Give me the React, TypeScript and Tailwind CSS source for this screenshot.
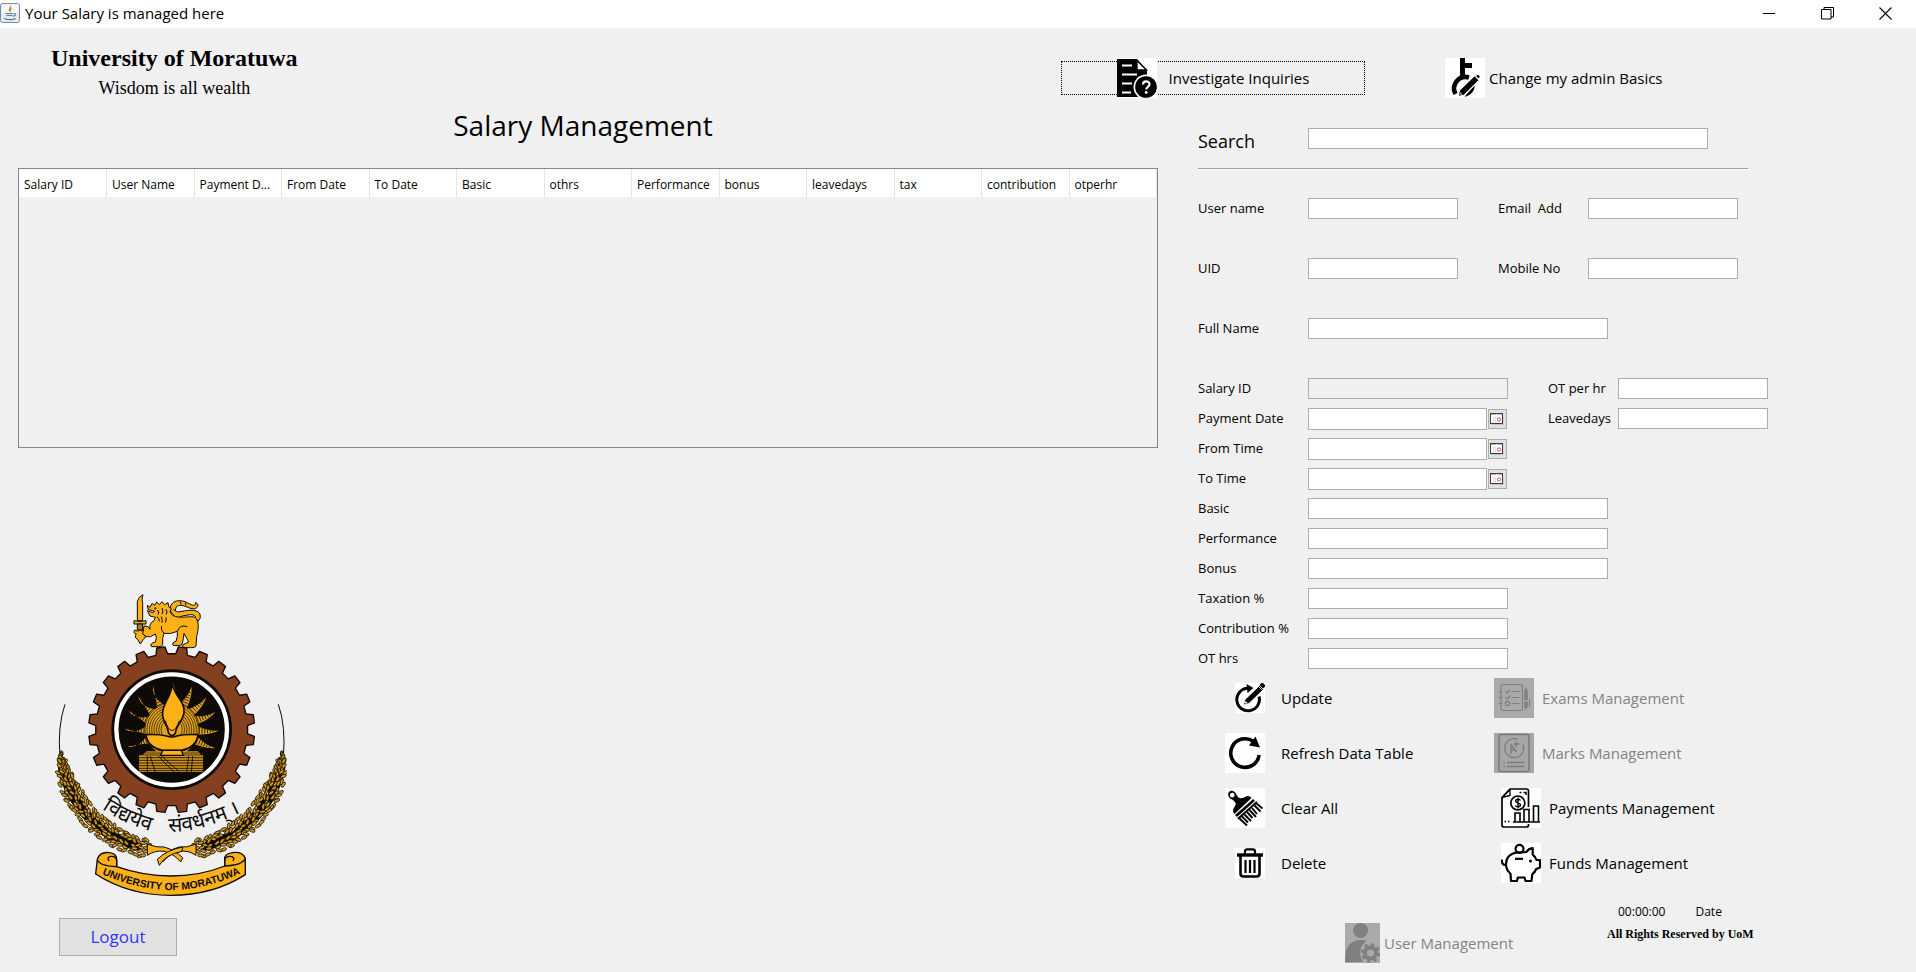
import React from "react";

const GOLD = "#fbb117";
const INK = "#0d0a08";

const COLUMNS = [
  "Salary ID",
  "User Name",
  "Payment D...",
  "From Date",
  "To Date",
  "Basic",
  "othrs",
  "Performance",
  "bonus",
  "leavedays",
  "tax",
  "contribution",
  "otperhr",
];

/* ---------- small icons ---------- */

function JavaIcon() {
  return (
    <svg width="20" height="20" viewBox="0 0 20 20" aria-hidden="true">
      <rect x="0.5" y="0.5" width="19" height="19" rx="2" fill="#e4eaf0" stroke="#7b8a99" />
      <rect x="1.5" y="1.5" width="17" height="8" fill="#f6f8fa" />
      <path d="M10 3c2 2-2 3-.5 5M11.5 5.5c-2 1-1.500 2-1 3.200" stroke="#e8762c" strokeWidth="1.300" fill="none" />
      <path d="M5.500 10.500h8M6.500 12.500h6M14 10.500c2.500 0 1.500 2.500-1 2.800M4 15.500c3 1.500 9 1.500 12 0" stroke="#5382a1" strokeWidth="1.200" fill="none" />
    </svg>
  );
}

function InquiryIcon() {
  return (
    <svg width="40" height="40" viewBox="0 0 40 40" aria-hidden="true">
      <rect width="40" height="40" fill="#fff" />
      <path d="M0 1H20L30 12V39H0Z" fill="#000" />
      <path d="M20 2.500V12H29.500Z" fill="#fff" stroke="#000" strokeWidth="1.300" />
      <path d="M5 7.500H15M5 16.500H20M5 25.500H15M5 34.500H14" stroke="#fff" strokeWidth="2.200" />
      <circle cx="29" cy="29" r="12.500" fill="#fff" />
      <circle cx="29" cy="29" r="10.800" fill="#000" />
      <path d="M26 26.500c0-4 6.500-4 6.500-.3 0 2.500-3.200 2.600-3.200 5.300" stroke="#fff" strokeWidth="2.200" fill="none" />
      <circle cx="29.200" cy="34.500" r="1.400" fill="#fff" />
    </svg>
  );
}

function KeyPencilIcon() {
  return (
    <svg width="40" height="40" viewBox="0 0 40 40" aria-hidden="true">
      <rect width="40" height="40" fill="#fff" />
      <path d="M15 0h5v5h7v5h-7v9h-5z" fill="#000" />
      <path d="M10.500 36A11.500 11.500 0 0 1 24 19.500" fill="none" stroke="#000" strokeWidth="4.600" />
      <path d="M29.500 27c1 5-4 11-10 11.800z" fill="#000" />
      <path d="M13 38.500l1.500-6.500L29.500 17.500l4.800 4.800L19.500 37z" fill="#000" stroke="#fff" strokeWidth="1.200" />
      <path d="M14 37.500l1-4 3 3z" fill="#777" />
      <path d="M31 18l2-1.200 1.800 1.800-1.200 2z" fill="#000" />
    </svg>
  );
}

function UpdateIcon() {
  return (
    <svg width="30" height="30" viewBox="0 0 30 30" aria-hidden="true">
      <rect width="30" height="30" fill="#fff" />
      <path d="M24 13.500a11.300 11.300 0 1 1-11-8.300" fill="none" stroke="#000" strokeWidth="3" />
      <path d="M11.500 1l7 4-6 5z" fill="#000" />
      <path d="M8.500 22l1.500-5.500L24.500 2.500l4 4L14 20.500z" fill="#000" stroke="#fff" strokeWidth=".9" />
      <path d="M24.500 2l2-2h1.500l2 2v1.500l-2 2z" fill="#000" />
      <path d="M23.500 3.500l4 4" stroke="#fff" strokeWidth=".8" />
      <path d="M9.800 20.800l.8-2.800 2 2z" fill="#fff" />
    </svg>
  );
}

function RefreshIcon() {
  return (
    <svg width="40" height="40" viewBox="0 0 40 40" aria-hidden="true">
      <rect width="40" height="40" fill="#fdfdfd" />
      <path d="M34.200 22A14.300 14.300 0 1 1 28.500 8.500" fill="none" stroke="#000" strokeWidth="3.600" />
      <path d="M30.500 3.500L35 14.500 24 12.500z" fill="#000" />
    </svg>
  );
}

function BrushIcon() {
  return (
    <svg width="40" height="40" viewBox="0 0 40 40" aria-hidden="true">
      <rect width="40" height="40" fill="#fdfdfd" />
      <path fillRule="evenodd" d="M3.500 8C2 4 6 1.500 9 3.500c2.500 1.600 2 3.500 4 5.500 2 2 4.500 1.500 7 0 3-2 5-.5 6.500 1L9.500 26c-2-2-2-4.500 0-7 1.500-2.500 1.800-4-.5-6C7 11 4.500 11 3.500 8zM7.200 4.800a2.400 2.400 0 1 0 .1 4.800 2.400 2.400 0 0 0-.1-4.800z" fill="#000" />
      <path d="M11 28L29 12" stroke="#000" strokeWidth="2.600" />
      <path d="M13 30.800L32 14" stroke="#000" strokeWidth="2" />
      <path d="M14.500 30.500l7.500 7M17 28.500l6 6M19.500 26.500l6.500 6.500M22 24l5.500 6M24.500 22l6.500 7M27 20l5 6M29.500 17.500l6 6M31.500 15.500l6 5" stroke="#000" strokeWidth="1.900" />
    </svg>
  );
}

function TrashIcon() {
  return (
    <svg width="30" height="30" viewBox="0 0 30 30" aria-hidden="true">
      <rect width="30" height="30" fill="#fff" />
      <path d="M2 7h26" stroke="#000" strokeWidth="3.400" />
      <path d="M10 6V3.500Q10 1.300 12.200 1.300h5.600Q20 1.300 20 3.500V6" fill="none" stroke="#000" strokeWidth="2.200" />
      <path d="M5.500 8v17.500q0 3 3 3h13q3 0 3-3V8" fill="none" stroke="#000" strokeWidth="2.600" />
      <path d="M10.500 12v13M15 12v13M19.500 12v13" stroke="#000" strokeWidth="2.200" />
    </svg>
  );
}

function ExamsIcon() {
  return (
    <svg width="40" height="40" viewBox="0 0 40 40" aria-hidden="true">
      <rect width="40" height="40" fill="#aaa" />
      <g fill="none" stroke="#808080" strokeWidth="1.200">
        <rect x="7" y="6.500" width="21.500" height="26" rx="2" />
        <path d="M4.500 14h4M4.500 19.500h4M4.500 25.500h4M17.500 13.500h8M17.500 19.500h8M17.500 25.500h8M11.500 13l1.800 2 3-3.500M11.500 19l1.800 2 3-3.500" />
        <circle cx="13.500" cy="25.500" r="2.200" />
      </g>
      <path d="M32 9l1.800 4v9h-3.600v-9zM30.200 23.500h3.600V29l-1.800 2.500L30.200 29z" fill="#808080" />
      <path d="M35.500 21v8" stroke="#808080" />
    </svg>
  );
}

function MarksIcon() {
  return (
    <svg width="40" height="40" viewBox="0 0 40 40" aria-hidden="true">
      <rect width="40" height="40" fill="#a6a6a6" />
      <g fill="none" stroke="#7c7c7c" strokeWidth="1.200">
        <rect x="5" y="1.500" width="30" height="37" rx="2" strokeWidth="1.600" />
        <path d="M29 11.500a9.500 9.500 0 1 1-5.500-5.300M29.200 13.500a10 10 0 0 1 .3 3" />
        <path d="M16.800 21l.5-9 5.500 7M17 17.500l4-1.500M22 8.500v5.500M19.500 11h6" strokeWidth="1.400" />
        <path d="M9.500 29.500h1.500M13 29.500h17.500M9.500 33.500h1.500M13 33.500h17.500" strokeWidth="1.500" />
      </g>
    </svg>
  );
}

function PaymentsIcon() {
  return (
    <svg width="40" height="40" viewBox="0 0 40 40" aria-hidden="true">
      <rect width="40" height="40" fill="#fdfdfd" />
      <g fill="none" stroke="#000" strokeWidth="1.700">
        <path d="M27.500 19V3Q27.500 1 25.500 1H9L1 9.500V37q0 2 2 2h22.500q2 0 2-2v-1" />
        <path d="M1 9.500L9 7.500V1M1.500 9l7-7" strokeWidth="1.300" />
        <circle cx="16.800" cy="15" r="7" />
        <path d="M19.500 12.500c-.8-1.500-5-1.800-5 .5s5 1.500 5 4-4.500 2-5.200.5M17 9.500v11" strokeWidth="1.400" />
        <path d="M14 34V25h5v9M23 34V21.500h5V34M32.500 34V18h5v16" strokeWidth="1.600" />
        <path d="M12 34H39M3.500 33.500h1.500M7 33.500h1.500M18.500 4.500h2M22.500 4.500h2.500v2.500" strokeWidth="1.500" />
      </g>
    </svg>
  );
}

function PiggyIcon() {
  return (
    <svg width="40" height="40" viewBox="0 0 40 40" aria-hidden="true">
      <rect width="40" height="40" fill="#fff" />
      <g fill="none" stroke="#000" strokeWidth="2.200" strokeLinejoin="round">
        <path d="M16 9.500C9 10.500 5 15 5 21.500c0 4 2 7 4.500 9.300L10 38h6l.8-3.500h6.700L24.500 38h6l.7-6.500c1.800-1.600 3-3 4-5.500l3.800-1.500v-7.500h-3.500c-.7-2.200-2-4-3.800-5.400V5.200c-3 .3-4.800 1.300-6.200 3.800z" />
        <circle cx="18.500" cy="5.800" r="4" />
        <path d="M5 21.500c-2.500 1-4.500-.8-4-5" />
        <path d="M14 15.800h8" />
      </g>
      <circle cx="29.500" cy="18" r="1.500" fill="#000" />
    </svg>
  );
}

function UserGearIcon() {
  return (
    <svg width="35" height="40" viewBox="0 0 35 40" aria-hidden="true">
      <rect width="35" height="40" fill="#aaa" />
      <circle cx="15.500" cy="7.500" r="7.500" fill="#808080" />
      <path d="M0 39c0-14 4-22 16-22 3.500 0 5 .8 5 1.500-6 4-8 12-3 20.500z" fill="#808080" />
      <circle cx="25.500" cy="30" r="5.600" fill="none" stroke="#808080" strokeWidth="4" />
      <circle cx="25.500" cy="30" r="8.400" fill="none" stroke="#808080" strokeWidth="2.800" strokeDasharray="3.300 3.297" />
    </svg>
  );
}

function CalendarIcon() {
  return (
    <svg width="14" height="12" viewBox="0 0 14 12" aria-hidden="true">
      <path d="M1 11.500h13V2" stroke="#c4c4c4" fill="none" />
      <rect x="0.500" y="0.500" width="12" height="10" fill="#fff" stroke="#403c40" />
      <path d="M1 1.500h5" stroke="#e9b04a" />
      <path d="M7 1.500h5" stroke="#9cc3ec" />
      <path d="M3.500 4v6M5.500 4v6" stroke="#dcdcdc" />
      <circle cx="9" cy="6.500" r="1.600" fill="none" stroke="#e05050" />
    </svg>
  );
}

/* ---------- university crest ---------- */

const CX = 395;
const CY = 451;

function polar(r: number, deg: number) {
  const a = (deg * Math.PI) / 180;
  return `${(CX + r * Math.sin(a)).toFixed(1)} ${(CY - r * Math.cos(a)).toFixed(1)}`;
}

function gearPath() {
  const pts: string[] = [];
  for (let i = 0; i < 24; i++) {
    const a = 7.5 + i * 15;
    pts.push(polar(228, a - 4.4), polar(249, a - 2.9), polar(249, a + 2.9), polar(228, a + 4.4));
  }
  return `M${pts.join("L")}Z`;
}

const RAYS = [0, 24, 46, 67, 90, 112, 248, 270, 293, 314, 336];

function rayPath(a: number) {
  const s = a > 180 ? -1 : 1;
  return `M${polar(74, a - 11)}Q${polar(104, a + 3 * s)} ${polar(142, a + 1)}Q${polar(112, a + 9 * s)} ${polar(74, a + 11)}Z`;
}

function rayBars(a: number) {
  let d = "";
  for (let r = 84; r < 132; r += 8) {
    const w = (9 * (142 - r)) / 68;
    d += `M${polar(r, a - w)}L${polar(r, a + w + 1)}`;
  }
  return d;
}

function wheatGrains() {
  const p = [
    [64, 530],
    [74, 640],
    [160, 776],
    [318, 806],
  ];
  const out: { x: number; y: number; a: number }[] = [];
  let seed = 7;
  const rand = () => {
    seed = (seed * 16807) % 2147483647;
    return seed / 2147483647 - 0.5;
  };
  for (let i = 0; i < 34; i++) {
    const t = i / 33;
    const u = 1 - t;
    const x = u * u * u * p[0][0] + 3 * u * u * t * p[1][0] + 3 * u * t * t * p[2][0] + t * t * t * p[3][0];
    const y = u * u * u * p[0][1] + 3 * u * u * t * p[1][1] + 3 * u * t * t * p[2][1] + t * t * t * p[3][1];
    const dx = u * u * (p[1][0] - p[0][0]) + 2 * u * t * (p[2][0] - p[1][0]) + t * t * (p[3][0] - p[2][0]);
    const dy = u * u * (p[1][1] - p[0][1]) + 2 * u * t * (p[2][1] - p[1][1]) + t * t * (p[3][1] - p[2][1]);
    const len = Math.hypot(dx, dy);
    const w = Math.min(25, 4 + t * 75);
    const deg = (Math.atan2(dy, dx) * 180) / Math.PI;
    [-1, -0.5, 0, 0.5, 1].forEach((k) => {
      const shift = rand() * 14;
      const side = w * k + rand() * 7;
      out.push({
        x: x - (dy / len) * side + (dx / len) * shift,
        y: y + (dx / len) * side + (dy / len) * shift,
        a: deg - 24 * k + rand() * 70,
      });
    });
  }
  return out;
}

function WheatBranch() {
  return (
    <g>
      <path d="M75 375Q52 440 60 535" fill="none" stroke={INK} strokeWidth="3" />
      <path d="M68 560C84 660 170 776 306 802" fill="none" stroke={INK} strokeWidth="30" />
      {wheatGrains().map((g, i) => (
        <ellipse
          key={i}
          cx={g.x.toFixed(1)}
          cy={g.y.toFixed(1)}
          rx="9"
          ry="4.500"
          transform={`rotate(${g.a.toFixed(0)} ${g.x.toFixed(1)} ${g.y.toFixed(1)})`}
          fill="#d0981f"
          stroke={INK}
          strokeWidth="2.200"
        />
      ))}
      <path d="M322 794Q350 806 372 803Q405 812 428 835L422 848Q400 822 372 816Q345 812 322 828Z" fill={GOLD} stroke={INK} strokeWidth="3" />
    </g>
  );
}

function Crest() {
  return (
    <svg viewBox="45 35 696 924" className="h-[308px] w-[232px]" role="img" aria-label="University of Moratuwa crest">
      {/* sword */}
      <g fill={GOLD} stroke={INK} strokeWidth="3" strokeLinejoin="round">
        <path d="M292 124V66Q296 52 309 46Q304 60 308 72V124Z" />
        <path d="M282 124Q300 130 318 124V134H282Z" />
        <path d="M292 134h16v18h-16z" fill="#b07a18" />
        <path d="M284 152q-6 10 5 12q-8 10 4 16l8 14 9-14q11-6 3-16q10-4 4-12q-8 6-16 1q-9 5-17-1z" />
        {/* lion */}
        <path d="M402 108C380 92 392 64 418 64C440 64 450 78 462 78Q470 76 466 70Q476 72 473 82Q466 92 448 86C430 78 416 74 408 84Q402 94 412 98C440 94 470 86 480 104Q484 118 474 126L466 116Q468 106 452 106Q430 106 402 120Z" />
        <path d="M322 78L330 84L336 72L344 78L350 68L358 76L366 67L374 76L384 70L386 82L394 88L390 98L398 108C420 120 450 108 466 114C480 130 474 154 470 172L468 200Q466 206 452 205L430 205Q424 196 438 192L446 188Q440 176 432 162L430 178L426 196Q420 200 400 198Q394 190 408 186Q414 172 412 156Q390 166 372 162Q366 176 368 192Q370 202 356 202H334Q328 192 346 188Q352 174 346 164Q330 176 320 172L308 164L312 140L324 142L330 150Q326 132 342 124L346 114L330 110L322 94L338 100L344 96L324 90Z" />
      </g>
      <g fill="none" stroke={INK} strokeWidth="3">
        <path d="M352 92q8 6 2 14M366 86q6 8 0 18M378 90q6 8 0 16M350 112q8 4 8 14M364 112q4 8 2 18M378 114q2 8-2 16M412 156q8-22 30-14M372 162q-10-8-8-22M400 90l8 6M420 66l4 10M436 70l2 8" />
        <circle cx="346" cy="87" r="2" />
      </g>

      {/* gear wheel */}
      <path d={gearPath()} fill="#85401f" stroke={INK} strokeWidth="4" strokeLinejoin="round" />
      <circle cx={CX} cy={CY} r="181" fill={INK} />
      <circle cx={CX} cy={CY} r="166" fill="none" stroke="#fff" strokeWidth="13" />

      {/* sun */}
      {RAYS.map((a) => (
        <g key={a}>
          <path d={rayPath(a)} fill="#e0a21c" />
          <path d={rayBars(a)} stroke={INK} strokeWidth="2.500" />
        </g>
      ))}
      <circle cx={CX} cy={CY} r="80" fill="#e0a21c" stroke={INK} strokeWidth="2" />
      {[74, 67, 60, 53, 46, 39, 32].map((r) => (
        <circle key={r} cx={CX} cy={CY} r={r} fill="none" stroke={INK} strokeWidth="2" />
      ))}

      {/* plinth */}
      <rect x="297" y="528" width="192" height="50" fill="#cf941b" />
      <path d="M297 535H489M297 543H489M297 551H489M297 559H489M297 567H489M297 574H489M330 528L346 578M352 528l50 50M362 528l54 48M446 530l-6 48M458 530l-4 48M322 530v48" stroke={INK} strokeWidth="2.500" fill="none" />
      <path d="M320 516H474L486 530H304Z" fill="#cf941b" />
      <path d="M314 521H478M308 527H484" stroke={INK} strokeWidth="2" />

      {/* lamp */}
      <path d="M318 466Q356 464 380 470Q395 476 410 470Q434 464 474 466Q470 504 424 513H368Q322 504 318 466Z" fill={GOLD} stroke={INK} strokeWidth="5" />
      <path d="M368 513H424L430 528H362Z" fill={GOLD} stroke={INK} strokeWidth="4" />
      <path d="M397 312C402 350 436 366 432 400C428 428 408 436 406 462Q396 476 386 462C384 438 364 424 368 398C372 366 394 352 397 312Z" fill={GOLD} stroke={INK} strokeWidth="5" />
      <path d="M376 424Q384 452 396 454Q410 450 418 424" fill="none" stroke={INK} strokeWidth="3" />

      {/* wheat */}
      <g transform="translate(790 0) scale(-1 1)">
        <WheatBranch />
      </g>
      <WheatBranch />
      <path d="M428 803Q380 812 352 840L358 858Q376 826 426 816Z" fill={GOLD} stroke={INK} strokeWidth="3" />

      {/* motto */}
      <path id="motto-left" d="M186 688Q264 744 372 764" fill="none" />
      <path id="motto-right" d="M386 758Q500 758 640 680" fill="none" />
      <text fontFamily="'Noto Sans Devanagari', 'Noto Sans', sans-serif" fontSize="62" fill={INK}>
        <textPath href="#motto-left">विद्ययेव</textPath>
      </text>
      <text fontFamily="'Noto Sans Devanagari', 'Noto Sans', sans-serif" fontSize="62" fill={INK}>
        <textPath href="#motto-right">संवर्धनम् ।</textPath>
      </text>

      {/* ribbon */}
      <g fill={GOLD} stroke={INK} strokeWidth="4" strokeLinejoin="round">
        <path d="M172 840Q180 816 208 820Q232 824 230 842V862Q310 890 392 890Q480 890 554 860V840Q552 824 578 820Q606 816 616 836V886Q520 948 392 948Q266 948 167 884Z" />
        <path d="M172 842Q180 860 230 862V842Q226 828 208 832Q200 838 208 844M616 838Q606 858 554 860V842Q558 828 576 832Q586 838 578 844" fill="none" />
      </g>
      <path id="ribbon" d="M176 880Q290 932 393 932Q496 932 612 878" fill="none" />
      <text fontFamily="'Liberation Sans Narrow', 'Liberation Sans', sans-serif" fontWeight="700" fontSize="31" fill={INK} textAnchor="middle">
        <textPath href="#ribbon" startOffset="50%">
          UNIVERSITY OF MORATUWA
        </textPath>
      </text>
    </svg>
  );
}

/* ---------- form pieces ---------- */

const LABEL = "text-[13px] leading-[21px] whitespace-pre";
const INPUT = "h-[21px] border border-[#abadb3] bg-white px-1 text-[13px] outline-none read-only:bg-[#f0f0f0]";

function Field({ id, label, width, readOnly = false }: { id: string; label: string; width: string; readOnly?: boolean }) {
  return (
    <>
      <label htmlFor={id} className={LABEL}>
        {label}
      </label>
      <input id={id} type="text" readOnly={readOnly} className={`${INPUT} ${width}`} />
    </>
  );
}

function DateField({ id, label }: { id: string; label: string }) {
  return (
    <>
      <label htmlFor={id} className={LABEL}>
        {label}
      </label>
      <div className="flex h-[21px] items-start gap-px">
        <input id={id} type="text" className="h-[22px] w-[179px] border border-[#abadb3] bg-white px-1 text-[13px] outline-none" />
        <button type="button" aria-label={`Pick ${label}`} className="mt-px flex h-5 w-[19px] items-center border border-[#adadad] bg-[#e1e1e1] pl-px">
          <CalendarIcon />
        </button>
      </div>
    </>
  );
}

function ToolButton({ icon, children }: { icon: React.ReactNode; children: React.ReactNode }) {
  return (
    <button type="button" className="flex h-10 items-center gap-4 text-[15px] leading-5">
      <span className="flex w-10 justify-end">{icon}</span>
      {children}
    </button>
  );
}

function ModuleButton({ icon, disabled = false, children }: { icon: React.ReactNode; disabled?: boolean; children: React.ReactNode }) {
  return (
    <button type="button" disabled={disabled} className="flex h-10 items-center gap-2 pl-[7px] text-[15px] leading-5 disabled:pl-0 disabled:text-[#838383]">
      {icon}
      {children}
    </button>
  );
}

export default function App() {
  return (
    <div className="flex min-h-screen flex-col bg-[#f0f0f0] font-['Open_Sans','Noto_Sans',sans-serif] text-black">
      <header className="flex h-7 items-center bg-white pr-0.5 pb-0.5">
        <JavaIcon />
        <span className="ml-[5px] text-[15px] leading-5">Your Salary is managed here</span>
        <div className="ml-auto flex">
          <button type="button" aria-label="Minimize" className="flex h-6 w-[58px] items-center justify-center">
            <svg width="13" height="13" viewBox="0 0 13 13"><path d="M0 6.500h12" stroke="#000" /></svg>
          </button>
          <button type="button" aria-label="Restore" className="flex h-6 w-[58px] items-center justify-center">
            <svg width="13" height="13" viewBox="0 0 13 13" fill="none" stroke="#000"><path d="M.5 2.500h9.500v9.500H.5zM3 2.500V.5h9.500V10H10" /></svg>
          </button>
          <button type="button" aria-label="Close" className="flex h-6 w-[58px] items-center justify-center">
            <svg width="13" height="13" viewBox="0 0 13 13"><path d="M.5.5l12 12M12.500.5l-12 12" stroke="#000" strokeWidth="1.100" /></svg>
          </button>
        </div>
      </header>

      <div className="flex pt-[15px]">
        <div className="ml-[51px] text-center font-['Liberation_Serif',serif]">
          <p className="text-2xl leading-[30px] font-bold">University of Moratuwa</p>
          <p className="text-lg leading-[30px]">Wisdom is all wealth</p>
        </div>
        <nav className="mt-[15px] ml-auto flex w-[855px] items-center gap-20 self-start">
          <button type="button" className="my-[3px] flex h-[34px] w-[304px] items-center justify-center gap-3 border border-dotted border-black text-[15px] leading-5">
            <InquiryIcon />
            Investigate Inquiries
          </button>
          <button type="button" className="flex items-center gap-1 text-[15px] leading-5">
            <KeyPencilIcon />
            Change my admin Basics
          </button>
        </nav>
      </div>

      <main className="flex flex-1 gap-10 pl-[18px]">
        <section className="flex min-w-0 flex-1 flex-col pb-4">
          <h1 className="mb-[21px] pr-2.5 text-center text-[28px] leading-[44px]">Salary Management</h1>
          <div className="h-[280px] border border-[#828790]">
            <table className="w-full table-fixed border-collapse">
              <thead>
                <tr className="h-7 bg-white">
                  {COLUMNS.map((c) => (
                    <th key={c} scope="col" className="border-r border-[#e5e5e5] p-0 pt-[3px] pl-[5px] text-left text-xs font-normal whitespace-nowrap">
                      {c}
                    </th>
                  ))}
                </tr>
              </thead>
            </table>
          </div>
          <div className="mt-auto flex flex-col items-start gap-[19px] pl-[37px]">
            <Crest />
            <button type="button" className="ml-1 h-[38px] w-[118px] border border-[#adadad] bg-[#e1e1e1] text-[17px] leading-6 text-[#3333ff]">
              Logout
            </button>
          </div>
        </section>

        <section className="w-[718px] shrink-0 pt-[25px]">
          <div className="flex items-start">
            <label htmlFor="search" className="w-[110px] text-lg leading-[26px]">
              Search
            </label>
            <input id="search" type="text" className={`${INPUT} w-[400px]`} />
          </div>
          <hr className="mt-[14px] h-0.5 w-[550px] border-t border-b border-t-[#a0a0a0] border-b-white" />

          <div className="mt-7 grid grid-cols-[110px_190px_90px_150px] gap-y-[39px]">
            <Field id="username" label="User name" width="w-[150px]" />
            <Field id="email" label="Email  Add" width="w-[150px]" />
            <Field id="uid" label="UID" width="w-[150px]" />
            <Field id="mobile" label="Mobile No" width="w-[150px]" />
            <Field id="fullname" label="Full Name" width="w-[300px]" />
          </div>

          <div className="mt-[39px] flex gap-10">
            <div className="grid grid-cols-[110px_200px] gap-y-[9px]">
              <Field id="salaryid" label="Salary ID" width="w-[200px]" readOnly />
              <DateField id="paymentdate" label="Payment Date" />
              <DateField id="fromtime" label="From Time" />
              <DateField id="totime" label="To Time" />
              <Field id="basic" label="Basic" width="w-[300px]" />
              <Field id="performance" label="Performance" width="w-[300px]" />
              <Field id="bonus" label="Bonus" width="w-[300px]" />
              <Field id="taxation" label="Taxation %" width="w-[200px]" />
              <Field id="contribution" label="Contribution %" width="w-[200px]" />
              <Field id="othrs" label="OT hrs" width="w-[200px]" />
            </div>
            <div className="grid grid-cols-[70px_150px] content-start gap-y-[9px]">
              <Field id="otperhr" label="OT per hr" width="w-[150px]" />
              <Field id="leavedays" label="Leavedays" width="w-[150px]" />
            </div>
          </div>

          <div className="mt-[9px] ml-[27px] grid grid-cols-[269px_1fr] gap-y-[15px]">
            <ToolButton icon={<UpdateIcon />}>Update</ToolButton>
            <ModuleButton icon={<ExamsIcon />} disabled>Exams Management</ModuleButton>
            <ToolButton icon={<RefreshIcon />}>Refresh Data Table</ToolButton>
            <ModuleButton icon={<MarksIcon />} disabled>Marks Management</ModuleButton>
            <ToolButton icon={<BrushIcon />}>Clear All</ToolButton>
            <ModuleButton icon={<PaymentsIcon />}>Payments Management</ModuleButton>
            <ToolButton icon={<TrashIcon />}>Delete</ToolButton>
            <ModuleButton icon={<PiggyIcon />}>Funds Management</ModuleButton>
          </div>

          <footer className="mt-5 ml-[147px] flex items-start">
            <button type="button" disabled className="mt-5 flex w-[262px] items-center gap-1 text-[15px] leading-5 text-[#838383]">
              <UserGearIcon />
              User Management
            </button>
            <div>
              <div className="flex gap-[30px] pl-[11px] text-xs leading-[18px]">
                <span>00:00:00</span>
                <span>Date</span>
              </div>
              <p className="mt-1 font-['Liberation_Serif',serif] text-xs leading-[18px] font-bold">All Rights Reserved by UoM</p>
            </div>
          </footer>
        </section>
      </main>
    </div>
  );
}
